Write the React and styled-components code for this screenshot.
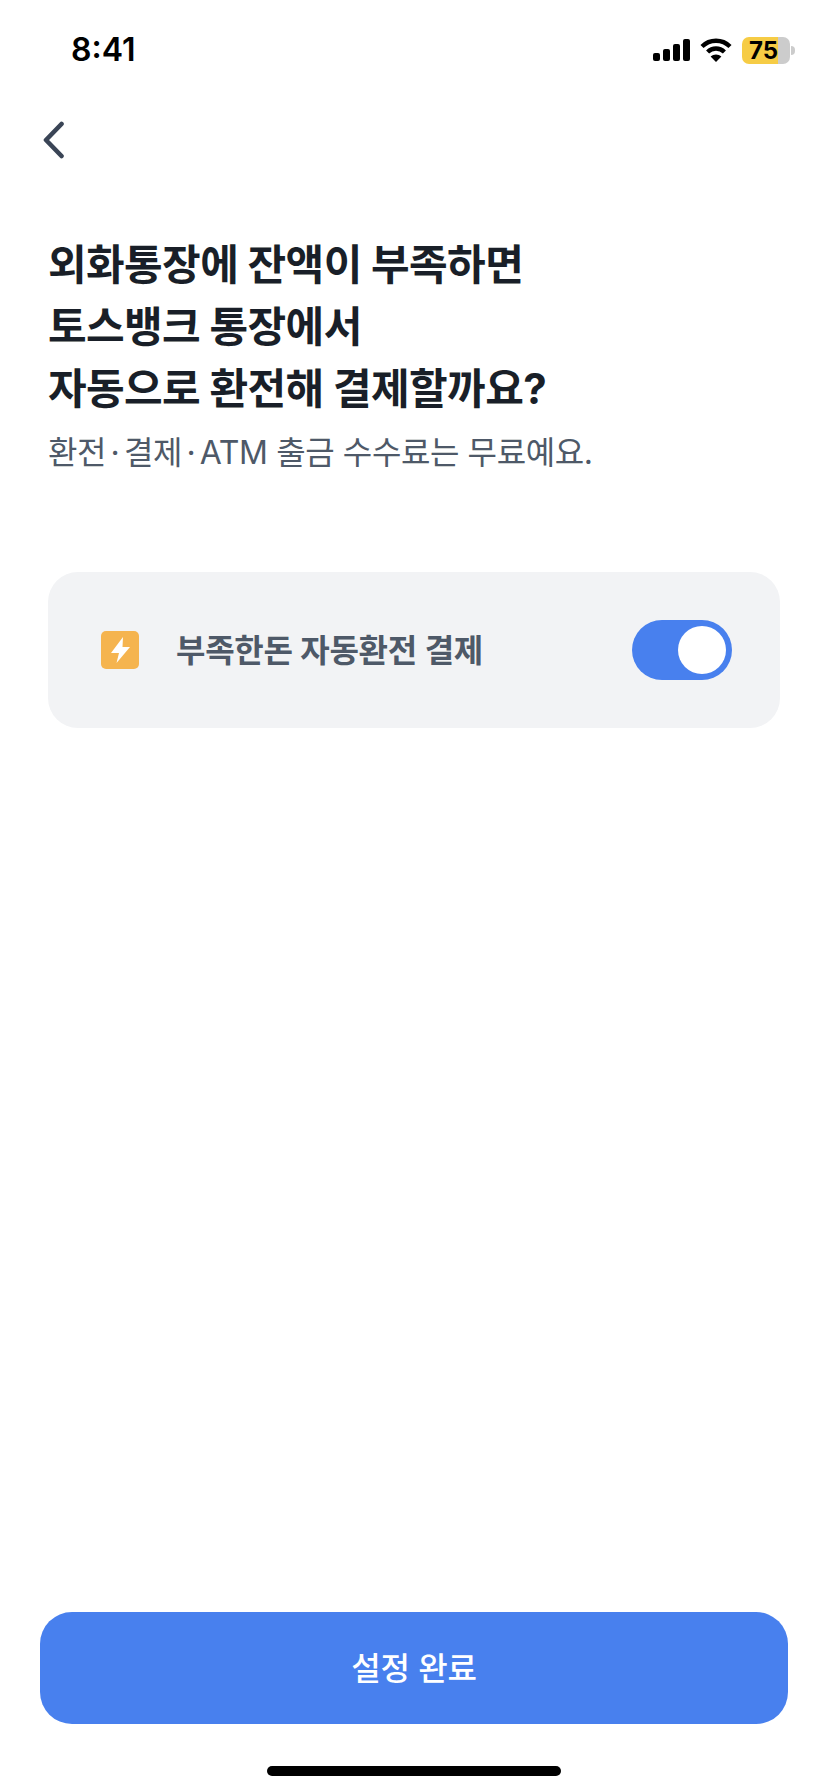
import styled, { createGlobalStyle } from "styled-components";

const GlobalStyle = createGlobalStyle`
    html, body {
        margin: 0;
        padding: 0;
        background: #FFFFFF;
    }
    * {
        box-sizing: border-box;
    }
`;

export default function App() {
    return (
        <Page>
            <GlobalStyle />
            <StatusBar>
                <Time>8:41</Time>
                <StatusIcons>
                    <svg width="37" height="22" viewBox="0 0 37 22" fill="#000000">
                        <rect x="0" y="14" width="7" height="8" rx="2" />
                        <rect x="10" y="10" width="7" height="12" rx="2" />
                        <rect x="20" y="5" width="7" height="17" rx="2" />
                        <rect x="30" y="0" width="7" height="22" rx="2" />
                    </svg>
                    <svg width="32" height="24" viewBox="0 0 32 24" fill="none" stroke="#000000" strokeWidth="4.4">
                        <path d="M2 8.5C9.8 0.8 22.2 0.8 30 8.5" />
                        <path d="M7.6 14C12.4 9.4 19.6 9.4 24.4 14" />
                        <path d="M16 24L10.6 18.6C13.6 15.8 18.4 15.8 21.4 18.6Z" fill="#000000" stroke="none" />
                    </svg>
                    <Battery>
                        <BatteryBody>75</BatteryBody>
                        <BatteryNub />
                    </Battery>
                </StatusIcons>
            </StatusBar>

            <BackButton aria-label="뒤로">
                <svg width="22" height="38" viewBox="0 0 22 38" fill="none" stroke="#3A4556" strokeWidth="4.6" strokeLinecap="round" strokeLinejoin="round">
                    <path d="M18.5 3L3 19L18.5 35" />
                </svg>
            </BackButton>

            <Title>
                외화통장에 잔액이 부족하면<br />
                토스뱅크 통장에서<br />
                자동으로 환전해 결제할까요?
            </Title>
            <Subtitle>환전<Dot>·</Dot>결제<Dot>·</Dot>ATM 출금 수수료는 무료예요.</Subtitle>

            <Card>
                <IconBox>
                    <svg width="19" height="26" viewBox="0 0 19 26" fill="#FFFFFF">
                        <path d="M12 0L0 16H8L5.5 26L19 10H11.5Z" />
                    </svg>
                </IconBox>
                <CardLabel>부족한돈 자동환전 결제</CardLabel>
                <Toggle>
                    <Knob />
                </Toggle>
            </Card>

            <Spacer />

            <SubmitButton>설정 완료</SubmitButton>
            <HomeBar />
        </Page>
    );
}

const Page = styled.div`
    display: flex;
    flex-direction: column;
    width: 828px;
    height: 1792px;
    background: #FFFFFF;
    font-family: Inter, "Noto Sans CJK KR", sans-serif;
`;

const StatusBar = styled.div`
    display: flex;
    align-items: center;
    justify-content: space-between;
    height: 28px;
    margin-top: 36px;
    padding: 0 33px 0 71px;
`;

const Time = styled.span`
    font-size: 32px;
    font-weight: 600;
    line-height: 28px;
    color: #000000;
`;

const StatusIcons = styled.div`
    display: flex;
    align-items: center;
    gap: 10px;
`;

const Battery = styled.div`
    display: flex;
    align-items: center;
    gap: 1px;
`;

const BatteryBody = styled.div`
    display: flex;
    align-items: center;
    justify-content: center;
    width: 48px;
    height: 27px;
    padding-right: 5px;
    border-radius: 7px;
    background: linear-gradient(90deg, #F6CC45 75%, #CCCCCC 75%);
    font-size: 24px;
    font-weight: 700;
    color: #000000;
`;

const BatteryNub = styled.div`
    width: 4px;
    height: 9px;
    border-radius: 0 4px 4px 0;
    background: #CCCCCC;
`;

const BackButton = styled.button`
    display: flex;
    align-self: flex-start;
    margin: 57px 0 0 43px;
    padding: 0;
    border: none;
    background: none;
`;

const Title = styled.h1`
    margin: 75px 0 0 48px;
    font-size: 42px;
    font-weight: 700;
    line-height: 62px;
    letter-spacing: -0.6px;
    color: #191F28;
`;

const Subtitle = styled.p`
    margin: 10px 0 0 48px;
    font-size: 32px;
    font-weight: 400;
    line-height: 46px;
    letter-spacing: -0.4px;
    color: #4E5968;
`;

const Dot = styled.span`
    margin: 0 4.5px;
`;

const Card = styled.div`
    display: flex;
    align-items: center;
    width: 732px;
    height: 156px;
    margin: 96px 0 0 48px;
    padding: 0 48px 0 53px;
    border-radius: 30px;
    background: #F2F3F5;
`;

const IconBox = styled.div`
    display: flex;
    align-items: center;
    justify-content: center;
    width: 38px;
    height: 38px;
    border-radius: 5px;
    background: #F5B44F;
`;

const CardLabel = styled.span`
    flex: 1;
    margin: 0 0 4px 37px;
    font-size: 32px;
    font-weight: 600;
    letter-spacing: -0.3px;
    color: #4E5968;
`;

const Toggle = styled.div`
    display: flex;
    align-items: center;
    justify-content: flex-end;
    width: 100px;
    height: 60px;
    padding-right: 6px;
    border-radius: 30px;
    background: #4880EE;
`;

const Knob = styled.div`
    width: 48px;
    height: 48px;
    border-radius: 50%;
    background: #FFFFFF;
`;

const Spacer = styled.div`
    flex: 1;
`;

const SubmitButton = styled.button`
    align-self: center;
    width: 748px;
    height: 112px;
    padding: 0 0 4px;
    border: none;
    border-radius: 32px;
    background: #4880EE;
    font-family: Inter, "Noto Sans CJK KR", sans-serif;
    font-size: 32px;
    font-weight: 500;
    letter-spacing: -0.2px;
    color: #FFFFFF;
`;

const HomeBar = styled.div`
    align-self: center;
    width: 294px;
    height: 10px;
    margin: 42px 0 16px;
    border-radius: 5px;
    background: #000000;
`;
